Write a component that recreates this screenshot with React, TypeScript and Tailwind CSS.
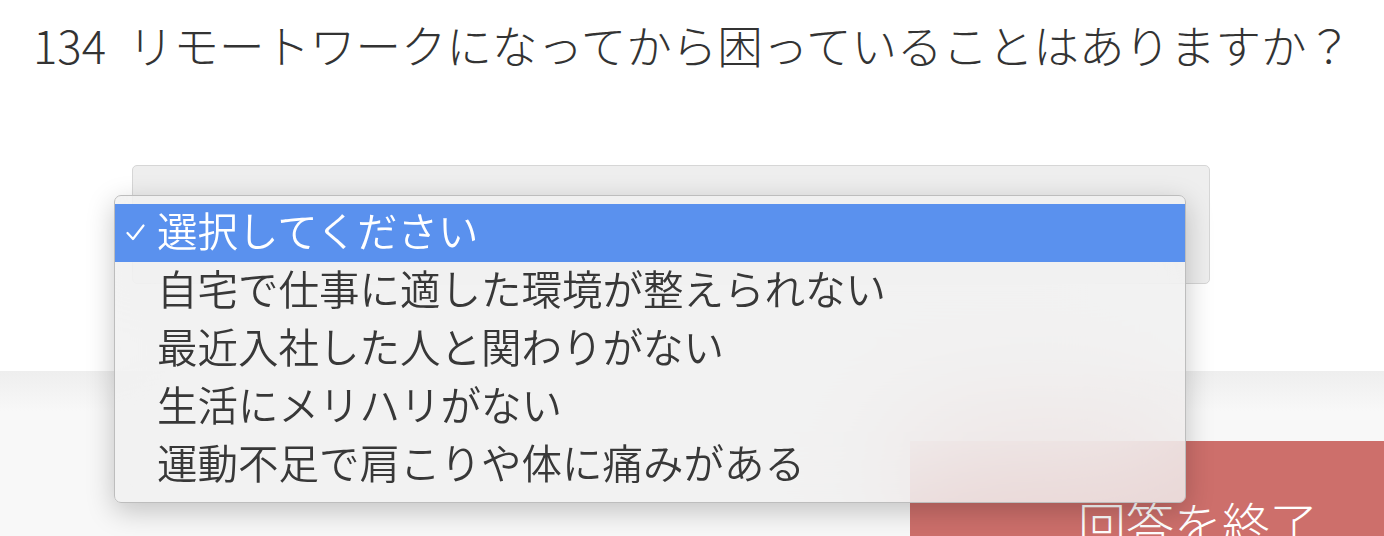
const options = [
  '選択してください',
  '自宅で仕事に適した環境が整えられない',
  '最近入社した人と関わりがない',
  '生活にメリハリがない',
  '運動不足で肩こりや体に痛みがある',
]

function CheckMark() {
  return (
    <svg width="19" height="17" viewBox="0 0 19 17" fill="none">
      <path d="M1.5 9 L7 15 L17.5 1.5" stroke="white" strokeWidth="2.2" strokeLinecap="round" strokeLinejoin="round" />
    </svg>
  )
}

export default function App() {
  const selected = 0

  return (
    <div className="relative h-[536px] overflow-hidden bg-white font-['Noto_Sans_CJK_JP','Noto_Sans',sans-serif] text-[#333]">
      <h1 className="pt-[22px] pl-[33px] text-[45.5px] leading-none font-light whitespace-nowrap">
        <span className="mr-[12px]">134</span> リモートワークになってから困っていることはありますか？
      </h1>

      {/* closed select */}
      <div className="mt-[97px] ml-[132px] w-[1078px] h-[119px] rounded-[5px] border border-[#d6d6d6] bg-[#eeeeee]" />

      {/* footer */}
      <div className="mt-[87px] h-[166px] pt-[70px] pl-[910px] flex bg-[linear-gradient(to_bottom,#eeeeee,#f8f8f8_40px)]">
        <button className="shrink-0 w-[576px] h-[130px] pt-[57px] bg-[#cd6f6b] text-white text-[48px] leading-none font-light flex justify-center items-start">
          回答を終了
        </button>
      </div>

      {/* open dropdown list */}
      <div className="absolute left-[114px] top-[195px] w-[1072px] py-[8px] rounded-[7px] border border-[#bdbdbd] bg-[#f0f0f0]/80 backdrop-blur-3xl shadow-[0_8px_28px_rgba(0,0,0,0.22)]">
        {options.map((opt, i) => (
          <div
            key={opt}
            className={`relative h-[58px] pl-[42px] pb-[6px] flex items-center text-[40.5px] leading-none font-[350] whitespace-nowrap ${
              i === selected ? 'bg-[#5a91ee] text-white' : 'text-[#383838]'
            }`}
          >
            {i === selected && (
              <span className="absolute left-[11px] top-[20px]">
                <CheckMark />
              </span>
            )}
            {opt}
          </div>
        ))}
      </div>
    </div>
  )
}
